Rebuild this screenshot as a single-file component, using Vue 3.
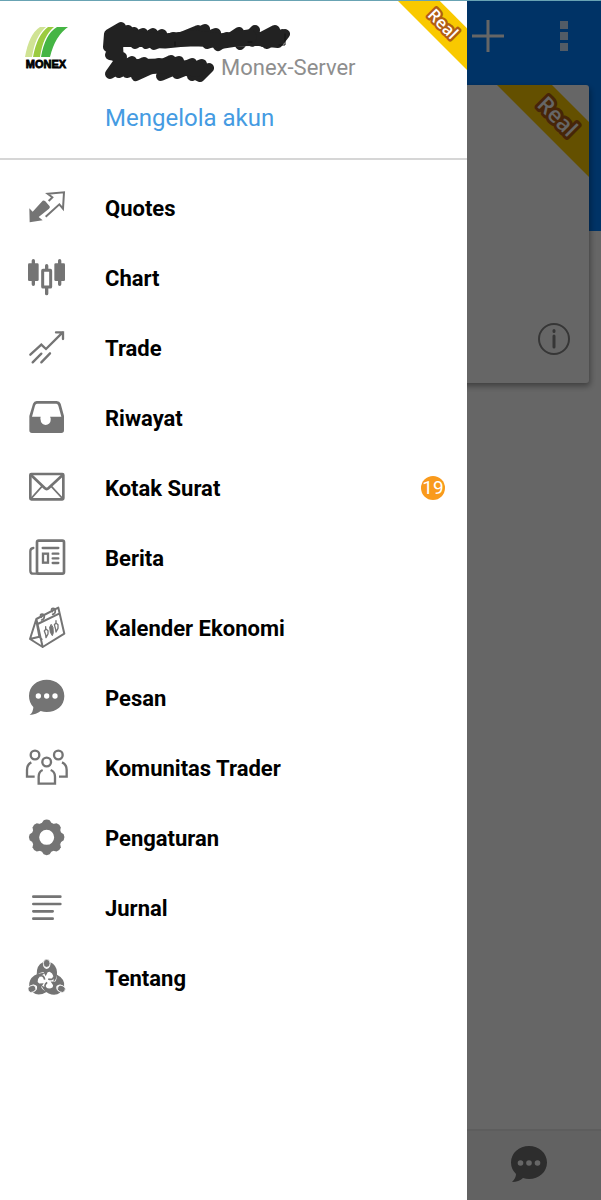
<script setup>
import { h } from 'vue'

const tooth = '<path d="M95 55L101 46Q110 41 119 46L125 55Z"'
const teeth = [0, 45, 90, 135, 180, 225, 270, 315]
  .map(a => `${tooth} transform="rotate(${a} 110 97)"/>`)
  .join('')

const items = [
  {
    label: 'Quotes',
    box: '36 9 150 150',
    icon: `<path fill="currentColor" d="M58 85L68 95L98 62Q102 60 106 64L119 79Q121 83 117 86L86 111L98 121L59 127Z"/>
      <path d="M116 63L127 52L113 41L162 37L159 86L148 73L107 110" stroke-width="6"/>`
  },
  {
    label: 'Chart',
    box: '36 219 150 150',
    icon: `<g fill="currentColor"><rect x="54" y="250" width="32" height="53" rx="4"/><rect x="133" y="250" width="32" height="53" rx="4"/></g>
      <path d="M70 242V313M149 242V313M110 257V268M110 324V341" stroke-width="10" stroke-linecap="round"/>
      <rect x="98" y="271" width="24" height="50" rx="1" stroke-width="9"/>`
  },
  {
    label: 'Trade',
    box: '36 429 150 150',
    icon: `<path d="M61 524L94 494L108 507L158 457M138 457H159V477M68 547L94 521M94 547L120 520" stroke-width="7" stroke-linecap="round"/>`
  },
  {
    label: 'Riwayat',
    box: '36 9 150 150',
    icon: `<path fill="currentColor" fill-rule="evenodd" d="M80 33H140Q149 33 152 41L162 78V121Q162 129 154 129H66Q58 129 58 121V78L69 41Q72 33 80 33ZM81 41Q77 41 75 47L66 80H92A14 14 0 0 0 92 90A15 15 0 0 0 122 90Q123 84 120 80H154L145 47Q143 41 139 41Z"/>`
  },
  {
    label: 'Kotak Surat',
    badge: 19,
    box: '36 219 150 150',
    icon: `<rect x="61" y="252" width="99" height="76" rx="3" stroke-width="8"/>
      <path d="M63 255L104 294Q110 300 116 294L158 255" stroke-width="8"/><path d="M63 326L96 289M158 326L124 289" stroke-width="5"/>`
  },
  {
    label: 'Berita',
    box: '36 429 150 150',
    icon: `<rect x="81" y="452" width="81" height="99" rx="5" stroke-width="8"/>
      <path d="M70 474Q61 475 61 484V542Q61 551 70 551H84" stroke-width="7" stroke-linecap="round"/>
      <path d="M98 474H145M128 491H145M128 505H145M128 519H145" stroke-width="7" stroke-linecap="round"/>
      <rect x="99" y="491" width="15" height="27" stroke-width="7"/>`
  },
  {
    label: 'Kalender Ekonomi',
    box: '36 39 150 150',
    icon: `<g stroke-linejoin="round" stroke-linecap="round"><path d="M79 87L145 53L163 131L98 171ZM83 102L149 70M79 87L60 147L98 171M79 92L88 140L60 147M88 140L95 148" stroke-width="6"/>
      <path d="M94 82Q88 73 96 72Q103 73 103 79Q103 88 95 90M127 65Q121 56 129 55Q136 56 136 62Q136 71 128 73" stroke-width="5"/>
      <path d="M107 110V118L103 123L107 134L108 143L114 132V122L108 117M138 92V99L133 104L137 118L138 126L144 115V104L138 99" stroke-width="4"/>
      <path fill="currentColor" d="M123 104L119 112L121 127L127 137L130 128L129 113Z" stroke-width="3"/></g>`
  },
  {
    label: 'Pesan',
    box: '36 249 150 150',
    icon: `<path fill="currentColor" d="M110 269C139 269 163 288 163 318C163 348 139 366 110 366Q101 366 92 363Q79 374 59 375Q70 366 70 351Q57 338 57 318C57 288 81 269 110 269Z"/>
      <g fill="#fff"><circle cx="85" cy="318" r="8"/><circle cx="110" cy="318" r="8"/><circle cx="135" cy="318" r="8"/></g>`
  },
  {
    label: 'Komunitas Trader',
    box: '36 459 150 150',
    icon: `<g stroke-width="7"><circle cx="75" cy="495" r="13"/><circle cx="145" cy="495" r="13"/><circle cx="110" cy="516" r="13"/>
      <path d="M64 517Q51 523 51 540V560H74M156 517Q170 523 170 540V560H147M98 540Q86 545 86 560V581H135V560Q135 545 122 540"/></g>`
  },
  {
    label: 'Pengaturan',
    box: '36 24 150 150',
    icon: `<circle cx="110" cy="97" r="34" stroke-width="23"/><g fill="currentColor">${teeth}</g>`
  },
  {
    label: 'Jurnal',
    box: '36 234 150 150',
    icon: `<path d="M70 275H151M70 297H151M70 319H128M70 341H128" stroke-width="8" stroke-linecap="round"/>`
  },
  {
    label: 'Tentang',
    box: '36 444 150 150',
    icon: [0, 120, 240].map(a => `<g transform="rotate(${a} 110 526)">
      <path fill="currentColor" d="M99 472Q79 480 80 510Q91 500 101 502L107 514L113 502L119 500Q128 504 130 514L131 532Q142 519 141 501Q139 480 121 472Q123 489 110 492Q97 489 99 472Z"/>
      <ellipse fill="currentColor" cx="110" cy="475" rx="10" ry="12" stroke="#fff" stroke-width="2"/>
      <path d="M90 513Q101 509 104 524" stroke-width="5"/></g>`).join('')
  }
]

const Ribbon = () =>
  h('svg', { viewBox: '0 0 92 92', role: 'img', 'aria-label': 'Real' }, [
    h('path', { d: 'M0 0H55L92 37V92Z', fill: '#f9c900' }),
    h('text', {
      x: 60, y: 39, transform: 'rotate(45 60 32)', 'text-anchor': 'middle',
      'font-family': '"Open Sans", "Noto Sans", sans-serif', 'font-size': 22, 'font-weight': 600,
      fill: '#fff', stroke: '#b15d14', 'stroke-width': 6, 'stroke-linejoin': 'round', 'paint-order': 'stroke'
    }, 'Real')
  ])
</script>

<template>
  <div class="screen">
    <main class="app">
      <header class="toolbar">
        <button aria-label="Tambah akun">
          <svg width="32" height="32" viewBox="0 0 32 32"><path d="M16 0V32M0 16H32" stroke="#fff" stroke-width="3" /></svg>
        </button>
        <button aria-label="Menu lainnya">
          <svg width="8" height="30" viewBox="0 0 8 30" fill="#fff" fill-opacity="0.8"><path d="M0 0H8V8H0ZM0 11H8V19H0ZM0 22H8V30H0Z" /></svg>
        </button>
      </header>
      <section class="card">
        <Ribbon class="card-ribbon" />
        <button class="info" aria-label="Info">
          <svg width="34" height="34" viewBox="0 0 34 34" fill="none" stroke="#888" stroke-width="2" stroke-linecap="round">
            <circle cx="17" cy="17" r="15" /><path d="M17 14V25M17 8.500V9.500" stroke-width="3" />
          </svg>
        </button>
      </section>
      <footer class="tabs">
        <button aria-label="Pesan">
          <svg width="36" height="36" viewBox="0 0 36 36">
            <path fill="#707070" d="M18 0C28 0 36 7 36 16.500C36 26 28 33 18 33Q15 33 12 32Q8 36 1 36Q5 32 5 28Q0 23 0 16.500C0 7 8 0 18 0Z" />
            <g fill="#fff"><circle cx="9.500" cy="17" r="2.800" /><circle cx="18" cy="17" r="2.800" /><circle cx="26.500" cy="17" r="2.800" /></g>
          </svg>
        </button>
      </footer>
    </main>

    <div class="scrim"></div>

    <aside class="drawer">
      <Ribbon class="drawer-ribbon" />
      <header class="account">
        <svg class="logo" width="46" height="46" viewBox="0 0 46 46" role="img" aria-label="Monex">
          <path fill="#d0e394" d="M2 31Q6 8 17 1H23Q12 10 9 31Z" />
          <path fill="#9bcb3f" d="M10 31Q14 9 25 1H31Q20 10 17 31Z" />
          <path fill="#45b544" d="M18 31Q22 8 34 1H45Q32 10 27 31Z" />
          <text x="23" y="42" text-anchor="middle">MONEX</text>
        </svg>
        <div class="details">
          <p class="server">Monex-Server</p>
          <a class="manage" href="#">Mengelola akun</a>
        </div>
        <svg class="scribble" width="192" height="64" viewBox="0 0 192 64" fill="none" stroke="#222" stroke-linecap="round" stroke-linejoin="round" aria-hidden="true">
          <path stroke-width="10" d="M20 7L8 14L7 27L27 10L12 29L33 12L22 22L42 13L34 24L52 13L45 24L61 14L53 25L72 17L60 22L80 17L97 10L85 18L104 9L96 20L115 13L106 24L126 17L117 26L138 12L123 23L142 17L139 25L154 10L151 22L174 10L162 22L182 14L166 24L184 14L177 23L158 21L20 22" />
          <path stroke-width="10" d="M13 26L9 35L21 37L9 54L31 41L18 53L43 42L26 53L58 43L35 56L70 40L48 50L78 41L60 56L91 43L76 54L101 44L91 56L108 48L99 57L80 48L22 46" />
          <path stroke-width="15" d="M12 20L24 16L44 20L64 21L94 18L122 21L148 17M14 16L15 34M20 47L60 46L96 49" />
          <path stroke="#111" stroke-width="1" d="M184 14V25H178M74 22V26M147 22H151" />
        </svg>
      </header>
      <nav>
        <ul>
          <li v-for="item in items" :key="item.label">
            <a href="#">
              <svg class="icon" width="50" height="50" :viewBox="item.box" fill="none" stroke-width="0" aria-hidden="true">
                <g stroke="currentColor" v-html="item.icon"></g>
              </svg>
              <span class="label">{{ item.label }}</span>
              <span v-if="item.badge" class="badge">{{ item.badge }}</span>
            </a>
          </li>
        </ul>
      </nav>
    </aside>
  </div>
</template>

<style>
body {
  margin: 0;
}
</style>

<style scoped>
.screen {
  position: relative;
  min-height: 100vh;
  overflow: hidden;
  font-family: Roboto, "Noto Sans", sans-serif;
}
.app {
  display: flex;
  flex-direction: column;
  min-height: 100vh;
  background: linear-gradient(#0080ff 231px, #fff 231px);
}
button {
  display: flex;
  padding: 0;
  border: 0;
  background: none;
}
.toolbar {
  display: flex;
  justify-content: flex-end;
  align-items: center;
  gap: 56px;
  height: 72px;
  padding-right: 33px;
  margin-bottom: 13px;
}
.card {
  display: flex;
  flex-direction: column;
  justify-content: space-between;
  align-items: flex-end;
  height: 298px;
  margin: 0 12px;
  border-radius: 3px;
  background: #fff;
  box-shadow: 1px 3px 6px rgba(0, 0, 0, 0.4);
}
.card-ribbon {
  width: 92px;
}
.info {
  margin: 0 18px 27px;
}
.tabs {
  display: flex;
  justify-content: flex-end;
  box-sizing: border-box;
  height: 71px;
  margin-top: auto;
  padding: 15px 54px 0;
  border-top: 2px solid #e8e8e8;
  background: #f6f6f6;
}
.scrim {
  position: absolute;
  inset: 0;
  background: rgba(0, 0, 0, 0.6);
}
.drawer {
  position: absolute;
  inset: 0 134px 0 0;
  background: #fff;
}
.screen::after {
  content: "";
  position: absolute;
  inset: 0 0 auto;
  height: 1px;
  background: #68a3b3;
}
.drawer-ribbon {
  position: absolute;
  top: 0;
  right: 0;
  width: 70px;
}
.account {
  position: relative;
  display: flex;
  align-items: flex-start;
  box-sizing: border-box;
  height: 160px;
  padding: 26px 24px 0 23px;
  border-bottom: 2px solid #d6d6d6;
}
.logo {
  flex: none;
  margin-right: 36px;
}
.logo text {
  font: bold 11px "Liberation Sans", sans-serif;
  stroke: #000;
  stroke-width: 0.8px;
}
.details {
  padding-top: 27px;
}
.server {
  margin: 0 0 20px;
  padding-left: 116px;
  font-size: 22px;
  line-height: 30px;
  color: #8e8e8e;
}
.manage {
  font-size: 24px;
  line-height: 30px;
  color: #459be2;
  text-decoration: none;
}
.scribble {
  position: absolute;
  top: 20px;
  left: 101px;
}
ul {
  margin: 0;
  padding: 13px 0 0;
  list-style: none;
}
nav a {
  display: flex;
  align-items: center;
  height: 70px;
  padding: 0 22px;
  color: #000;
  text-decoration: none;
}
.icon {
  flex: none;
  margin-right: 33px;
  color: #747474;
}
.label {
  flex: 1;
  font-size: 22px;
  font-weight: 700;
}
.badge {
  width: 24px;
  height: 24px;
  border-radius: 50%;
  background: #f99a1c;
  color: #fff;
  font-size: 19px;
  line-height: 24px;
  text-align: center;
}
</style>
